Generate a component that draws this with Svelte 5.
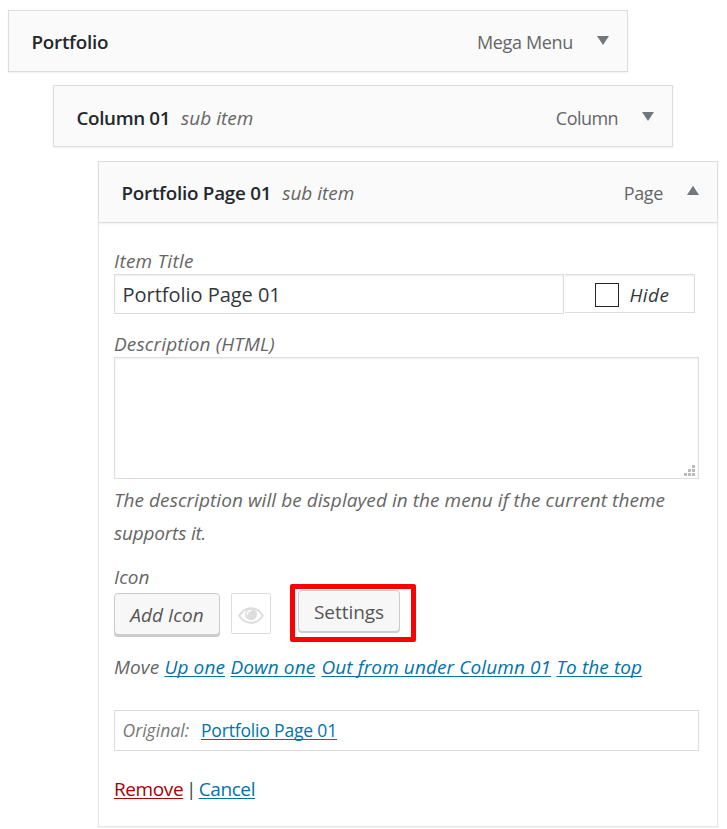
<script>
  const moves = [
    { label: 'Up one', w: 61 },
    { label: 'Down one', w: 86 },
    { label: 'Out from under Column 01', w: 230 },
    { label: 'To the top', w: 85 }
  ];
  let title = $state('Portfolio Page 01');
  let description = $state('');
</script>

{#snippet bar(name, sub, type, open)}
  <div class="bar">
    <span class="name">{name}</span>
    {#if sub}<span class="sub">sub item</span>{/if}
    <span class="type">{type}</span>
    <svg class="arrow" width="12" height="10" viewBox="0 0 12 10">
      <path d={open ? 'M6 -1.3 12 8H0z' : 'M0 0H12L6 9z'} fill="#72777c" />
    </svg>
  </div>
{/snippet}

<main>
  <section class="item depth0">{@render bar('Portfolio', false, 'Mega Menu', false)}</section>
  <section class="item depth1">{@render bar('Column 01', true, 'Column', false)}</section>
  <section class="item depth2">
    {@render bar('Portfolio Page 01', true, 'Page', true)}
    <div class="settings">
      <label class="label title" for="item-title">Item Title</label>
      <div class="titleRow">
        <input id="item-title" class="text" bind:value={title} />
        <div class="hide"><span class="check"></span><span>Hide</span></div>
      </div>

      <label class="label" for="item-desc">Description (HTML)</label>
      <div class="area">
        <textarea id="item-desc" bind:value={description}></textarea>
        <svg class="grip" width="11" height="11" viewBox="0 0 11 11" fill="#bbb">
          <path d="M8 0h3v3H8zM4 4h3v3H4zM8 4h3v3H8zM0 8h3v3H0zM4 8h3v3H4zM8 8h3v3H8z" />
        </svg>
      </div>
      <p class="help">The description will be displayed in the menu if the current theme <span class="tail">supports it.</span></p>

      <div class="label icon">Icon</div>
      <div class="buttons">
        <button class="btn add">Add Icon</button>
        <span class="eye">
          <svg width="26" height="17" viewBox="0 0 26 17">
            <path d="M1.2 8.8C4 4 8.2 1.2 13 1.2S22 4 24.8 8.8C22 13.3 17.8 15.8 13 15.8S4 13.3 1.2 8.8Z" fill="none" stroke="#ddd" stroke-width="1.9" />
            <circle cx="13" cy="7.3" r="6" fill="#ddd" />
            <path d="M9.3 7.2C9.3 4.9 10.9 3.5 13 3.5" fill="none" stroke="#fff" stroke-width="1.6" stroke-linecap="round" />
          </svg>
        </span>
        <div class="frame"><button class="btn set">Settings</button></div>
      </div>

      <p class="move">
        <span class="moveLabel">Move</span>
        {#each moves as m}<a href="#move" style:width="{m.w}px">{m.label}</a>{/each}
      </p>

      <div class="original"><span>Original:</span><a href="#page">Portfolio Page 01</a></div>
      <div class="actions"><a class="remove" href="#remove">Remove</a><span class="sep">|</span><a class="cancel" href="#cancel">Cancel</a></div>
    </div>
  </section>
</main>

<style>
  :global(body) { margin: 0; background: #fff; overflow: hidden; }
  * { box-sizing: border-box; }
  main {
    height: 829px;
    padding: 10px 0 0 8px;
    overflow: hidden;
    font: 19px/22px "Open Sans", "Noto Sans", sans-serif;
    color: #666;
  }
  .item { width: 620px; }
  .depth1 { margin: 13px 0 0 45px; }
  .depth2 { margin: 14px 0 0 90px; }
  .bar {
    display: flex;
    align-items: center;
    height: 62px;
    padding: 2px 18px 0 22.5px;
    background: #fafafa;
    border: 1px solid #ddd;
    box-shadow: 0 1px 2px rgba(0, 0, 0, .06);
    white-space: nowrap;
  }
  .depth1 .bar { padding-top: 3px; }
  .name { font-size: 18.8px; font-weight: 600; letter-spacing: -.23px; color: #23282d; }
  .depth1 .name { letter-spacing: -.35px; }
  .sub { margin-left: 11px; font-style: italic; letter-spacing: 0; }
  .type { margin-left: auto; font-size: 18px; letter-spacing: -.35px; }
  .depth1 .type { letter-spacing: -.55px; }
  .arrow { margin: -2px 0 0 24px; overflow: visible; }
  .settings {
    height: 604px;
    padding: 27px 18px 0 15px;
    border: 1px solid #e5e5e5;
    border-top: 0;
    box-shadow: 0 1px 1px rgba(0, 0, 0, .04);
  }
  .label { display: block; height: 24px; font-style: italic; letter-spacing: .15px; }
  .title { letter-spacing: .25px; }
  .titleRow { display: flex; align-items: flex-start; gap: 1px; height: 59px; }
  .text {
    width: 450px;
    height: 40px;
    margin: 0;
    padding: 1px 7.5px 0;
    border: 1px solid #ddd;
    box-shadow: inset 0 1px 2px rgba(0, 0, 0, .07);
    font: 20px "Open Sans", "Noto Sans", sans-serif;
    letter-spacing: -.03px;
    color: #32373c;
    outline: 0;
  }
  .hide {
    display: flex;
    align-items: center;
    gap: 10.5px;
    width: 130px;
    height: 39px;
    padding: 2px 0 0 30px;
    border: 1px solid #ddd;
    border-left: 0;
    box-shadow: inset 0 1px 2px rgba(0, 0, 0, .07);
    font-style: italic;
    letter-spacing: .4px;
    color: #32373c;
  }
  .check { width: 24px; height: 24px; border: 1px solid #23282d; background: #fff; }
  .area { position: relative; height: 122px; }
  textarea {
    display: block;
    width: 585px;
    height: 122px;
    margin: 0;
    border: 1px solid #ddd;
    box-shadow: inset 0 1px 2px rgba(0, 0, 0, .07);
    resize: none;
    outline: 0;
  }
  .grip { position: absolute; left: 570px; top: 108px; }
  .help { width: 575px; height: 66px; margin: 5px 0 16px; line-height: 33px; font-style: italic; letter-spacing: .06px; }
  .tail { letter-spacing: -.2px; }
  .icon { height: 18px; letter-spacing: 0; }
  .buttons { display: flex; align-items: flex-start; height: 58px; }
  .btn {
    height: 42px;
    padding: 1px 0 0;
    border: 1px solid #ccc;
    border-radius: 4px;
    background: #f7f7f7;
    box-shadow: 0 1px 0 #ccc;
    font: 19px/39px "Open Sans", "Noto Sans", sans-serif;
    color: #555;
  }
  .add { width: 106px; margin-top: 9px; padding-top: 2px; font-style: italic; letter-spacing: .1px; box-shadow: 0 2px 0 #ccc; }
  .eye {
    display: flex;
    align-items: center;
    justify-content: center;
    width: 40px;
    height: 41px;
    margin: 9px 0 0 11px;
    padding-top: 3px;
    border: 1px solid #ddd;
    border-radius: 2px;
  }
  .frame { width: 126px; height: 58px; margin-left: 19px; padding: 1px 3px; border: 5px solid red; border-radius: 2px; }
  .set { display: block; width: 102px; padding-top: 2px; letter-spacing: -.05px; }
  .move { display: flex; gap: 5px; margin: 14px 0 0; font-style: italic; white-space: nowrap; letter-spacing: .1px; }
  .moveLabel { width: 45.5px; }
  a { color: #0073aa; text-decoration: underline; text-decoration-thickness: 1px; text-underline-offset: 2px; text-decoration-skip-ink: none; }
  .original {
    display: flex;
    align-items: center;
    height: 41px;
    width: 585px;
    margin-top: 32px;
    padding: 0 0 2px 7.5px;
    border: 1px solid #ddd;
    font-size: 17.5px;
    letter-spacing: -.17px;
  }
  .original span { width: 78.5px; font-style: italic; letter-spacing: .05px; color: #777; }
  .actions { display: flex; margin-top: 27px; letter-spacing: -.4px; }
  .sep { width: 15.5px; text-align: center; color: #444; }
  .remove { color: #a00; }
</style>
